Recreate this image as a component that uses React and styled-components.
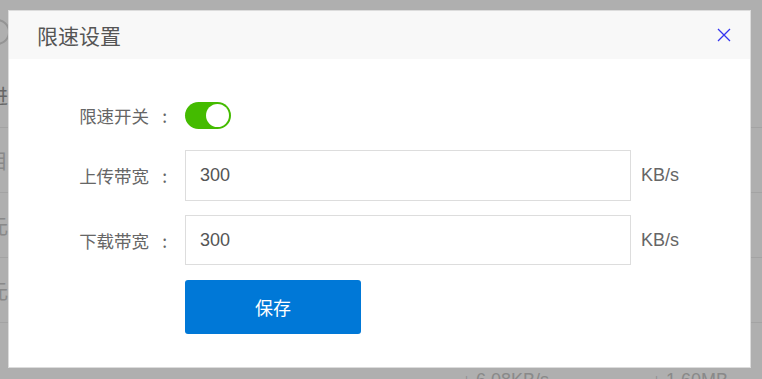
import React, { useState } from 'react'
import styled, { createGlobalStyle } from 'styled-components'

const GlobalStyle = createGlobalStyle`
  html, body {
    margin: 0;
    padding: 0;
    width: 762px;
    height: 379px;
    overflow: hidden;
    background: #fff;
    font-family: "Liberation Sans", "Noto Sans CJK SC", sans-serif;
  }
  * { box-sizing: border-box; }
`;

const Page = styled.div`
  position: relative;
  width: 762px;
  height: 379px;
  overflow: hidden;
  background: #fff;
`;

const Toolbar = styled.div`
  height: 63px;
  display: flex;
  align-items: center;
  margin-left: -16px;
`;

const RefreshRing = styled.div`
  width: 26px;
  height: 26px;
  border: 2px solid #d8d8d8;
  border-radius: 50%;
`;

const Row = styled.div`
  height: 65px;
  display: flex;
  align-items: center;
  border-bottom: 1px solid #eee;
  margin-left: -12px;
  color: ${p => p.$dark ? '#959595' : '#c8c8c8'};
  font-size: 20px;
  font-family: "Noto Sans CJK SC", sans-serif;
`;

const LastRow = styled(Row)`
  align-items: flex-end;
  height: 80px;
  border-bottom: none;
`;

const Speed = styled.span`
  font-family: "Liberation Sans", sans-serif;
  font-size: 18px;
  color: #c8c8c8;
  margin-bottom: 12px;
  margin-left: ${p => p.$left}px;
`;

const Backdrop = styled.div`
  position: absolute;
  inset: 0;
  background: rgba(0, 0, 0, 0.314);
`;

const Modal = styled.div`
  position: absolute;
  top: 10px;
  left: 8px;
  width: 743px;
  height: 358px;
  background: #fff;
  border: 1px solid #dcdcdc;
  display: flex;
  flex-direction: column;
`;

const Header = styled.div`
  height: 48px;
  background: #f8f8f8;
  display: flex;
  align-items: center;
  justify-content: space-between;
  padding: 0 18px 0 28px;
`;

const Title = styled.h3`
  margin: 0;
  font-family: "Noto Sans CJK SC", sans-serif;
  font-weight: 400;
  font-size: 21px;
  color: #555;
`;

const Close = styled.button`
  border: none;
  background: none;
  padding: 0;
  width: 16px;
  height: 16px;
  display: flex;
  align-items: center;
  justify-content: center;
  cursor: pointer;
`;

const Body = styled.div`
  padding-top: 43px;
  display: flex;
  flex-direction: column;
`;

const FormRow = styled.div`
  display: flex;
  align-items: center;
  margin-bottom: ${p => p.$gap}px;
`;

const Label = styled.label`
  width: 176px;
  padding-right: 18px;
  display: flex;
  justify-content: flex-end;
  font-family: "Noto Sans CJK SC", sans-serif;
  font-size: 17.5px;
  color: #666;
  white-space: nowrap;
`;

const Colon = styled.span`
  margin-left: 13px;
`;

const Toggle = styled.button`
  width: 46px;
  height: 27px;
  border: none;
  border-radius: 14px;
  background: ${p => p.$on ? '#44bb00' : '#ccc'};
  padding: 2px;
  display: flex;
  justify-content: ${p => p.$on ? 'flex-end' : 'flex-start'};
  cursor: pointer;
`;

const Knob = styled.span`
  width: 23px;
  height: 23px;
  border-radius: 50%;
  background: #fff;
`;

const Input = styled.input`
  width: 446px;
  height: ${p => p.$h}px;
  border: 1px solid #ddd;
  padding: 0 14px;
  font-family: "Liberation Sans", sans-serif;
  font-size: 18px;
  color: #555;
  outline: none;
`;

const Unit = styled.span`
  margin-left: 10px;
  font-family: "Liberation Sans", sans-serif;
  font-size: 18px;
  color: #666;
`;

const Spacer = styled.div`
  width: 176px;
`;

const SaveButton = styled.button`
  width: 176px;
  height: 54px;
  border: none;
  border-radius: 3px;
  background: #0078d7;
  color: #fff;
  font-family: "Noto Sans CJK SC", sans-serif;
  font-size: 18px;
  cursor: pointer;
`;

const App = () => {
  const [on, setOn] = useState(true)
  const [up, setUp] = useState('300')
  const [down, setDown] = useState('300')

  return (
    <Page>
      <GlobalStyle />
      <Toolbar><RefreshRing /></Toolbar>
      <Row $dark>进</Row>
      <Row>目</Row>
      <Row>元</Row>
      <Row>元</Row>
      <LastRow>
        元
        <Speed $left={454}>↓ 6.08KB/s</Speed>
        <Speed $left={103}>↓ 1.60MB</Speed>
      </LastRow>
      <Backdrop />
      <Modal>
        <Header>
          <Title>限速设置</Title>
          <Close aria-label="close">
            <svg width="14" height="14" viewBox="0 0 14 14">
              <path d="M1 1 L13 13 M13 1 L1 13" stroke="#3535f0" strokeWidth="1.3" fill="none" />
            </svg>
          </Close>
        </Header>
        <Body>
          <FormRow $gap={21}>
            <Label>限速开关<Colon>:</Colon></Label>
            <Toggle $on={on} onClick={() => setOn(!on)}><Knob /></Toggle>
          </FormRow>
          <FormRow $gap={14}>
            <Label>上传带宽<Colon>:</Colon></Label>
            <Input $h={51} value={up} onChange={e => setUp(e.target.value)} />
            <Unit>KB/s</Unit>
          </FormRow>
          <FormRow $gap={15}>
            <Label>下载带宽<Colon>:</Colon></Label>
            <Input $h={50} value={down} onChange={e => setDown(e.target.value)} />
            <Unit>KB/s</Unit>
          </FormRow>
          <FormRow $gap={0}>
            <Spacer />
            <SaveButton>保存</SaveButton>
          </FormRow>
        </Body>
      </Modal>
    </Page>
  )
}

export default App
